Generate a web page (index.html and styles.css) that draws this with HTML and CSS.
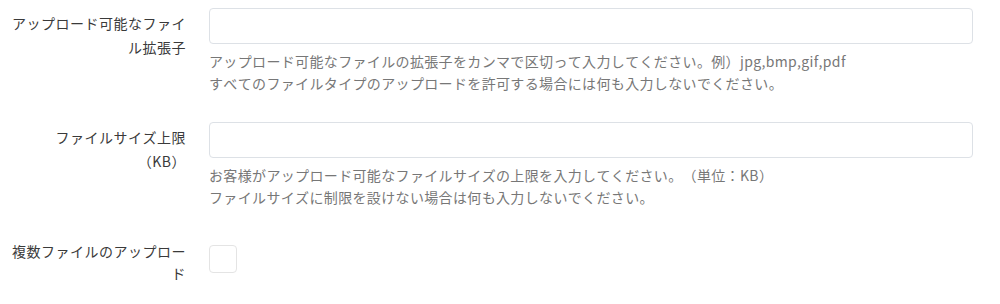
FILE: index.html
```html
<!DOCTYPE html>
<html lang="ja">
<head>
    <meta charset="UTF-8">
    <title>アップロード設定</title>
    <link rel="stylesheet" href="styles.css">
</head>
<body>
    <form class="settings">
        <div class="form-row">
            <label class="form-label" for="ext">アップロード可能なファイ<br>ル拡張子</label>
            <div class="form-field">
                <input type="text" id="ext" class="text-input">
                <p class="help">アップロード可能なファイルの拡張子をカンマで区切って入力してください。例）jpg,bmp,gif,pdf<br>すべてのファイルタイプのアップロードを許可する場合には何も入力しないでください。</p>
            </div>
        </div>

        <div class="form-row">
            <label class="form-label" for="size">ファイルサイズ上限<br>（KB）</label>
            <div class="form-field">
                <input type="text" id="size" class="text-input">
                <p class="help">お客様がアップロード可能なファイルサイズの上限を入力してください。（単位：KB）<br>ファイルサイズに制限を設けない場合は何も入力しないでください。</p>
            </div>
        </div>

        <div class="form-row check-row">
            <label class="form-label" for="multi">複数ファイルのアップロー<br>ド</label>
            <div class="form-field">
                <span class="checkbox" id="multi"></span>
            </div>
        </div>
    </form>
</body>
</html>
```

FILE: styles.css
```css
* {
    margin: 0;
    padding: 0;
    box-sizing: border-box;
}

body {
    font-family: "Noto Sans CJK JP", "Noto Sans", sans-serif;
    font-size: 14px;
    font-kerning: none;
    text-spacing-trim: space-all;
    background: #fff;
    padding-top: 8px;
}

.form-row {
    display: grid;
    grid-template-columns: 186px 764px;
    column-gap: 23px;
    margin-bottom: 28px;
}

.form-label {
    text-align: right;
    color: #3a3a3a;
    line-height: 24px;
    padding-top: 3px;
    letter-spacing: 0.5px;
    white-space: nowrap;
}

.text-input {
    display: block;
    width: 100%;
    height: 36px;
    border: 1px solid #dde1e6;
    border-radius: 4px;
    background: #fff;
    padding: 6px 12px;
    font: inherit;
}

.help {
    margin-top: 6px;
    color: #777;
    line-height: 22px;
    letter-spacing: 0.35px;
}

.check-row {
    margin-top: 32px;
}

.check-row .form-label {
    padding-top: 0;
    line-height: 22px;
}

.checkbox {
    display: block;
    width: 28px;
    height: 28px;
    margin-top: 5px;
    border: 1px solid #e4e4e4;
    border-radius: 4px;
    background: #fff;
}
```
